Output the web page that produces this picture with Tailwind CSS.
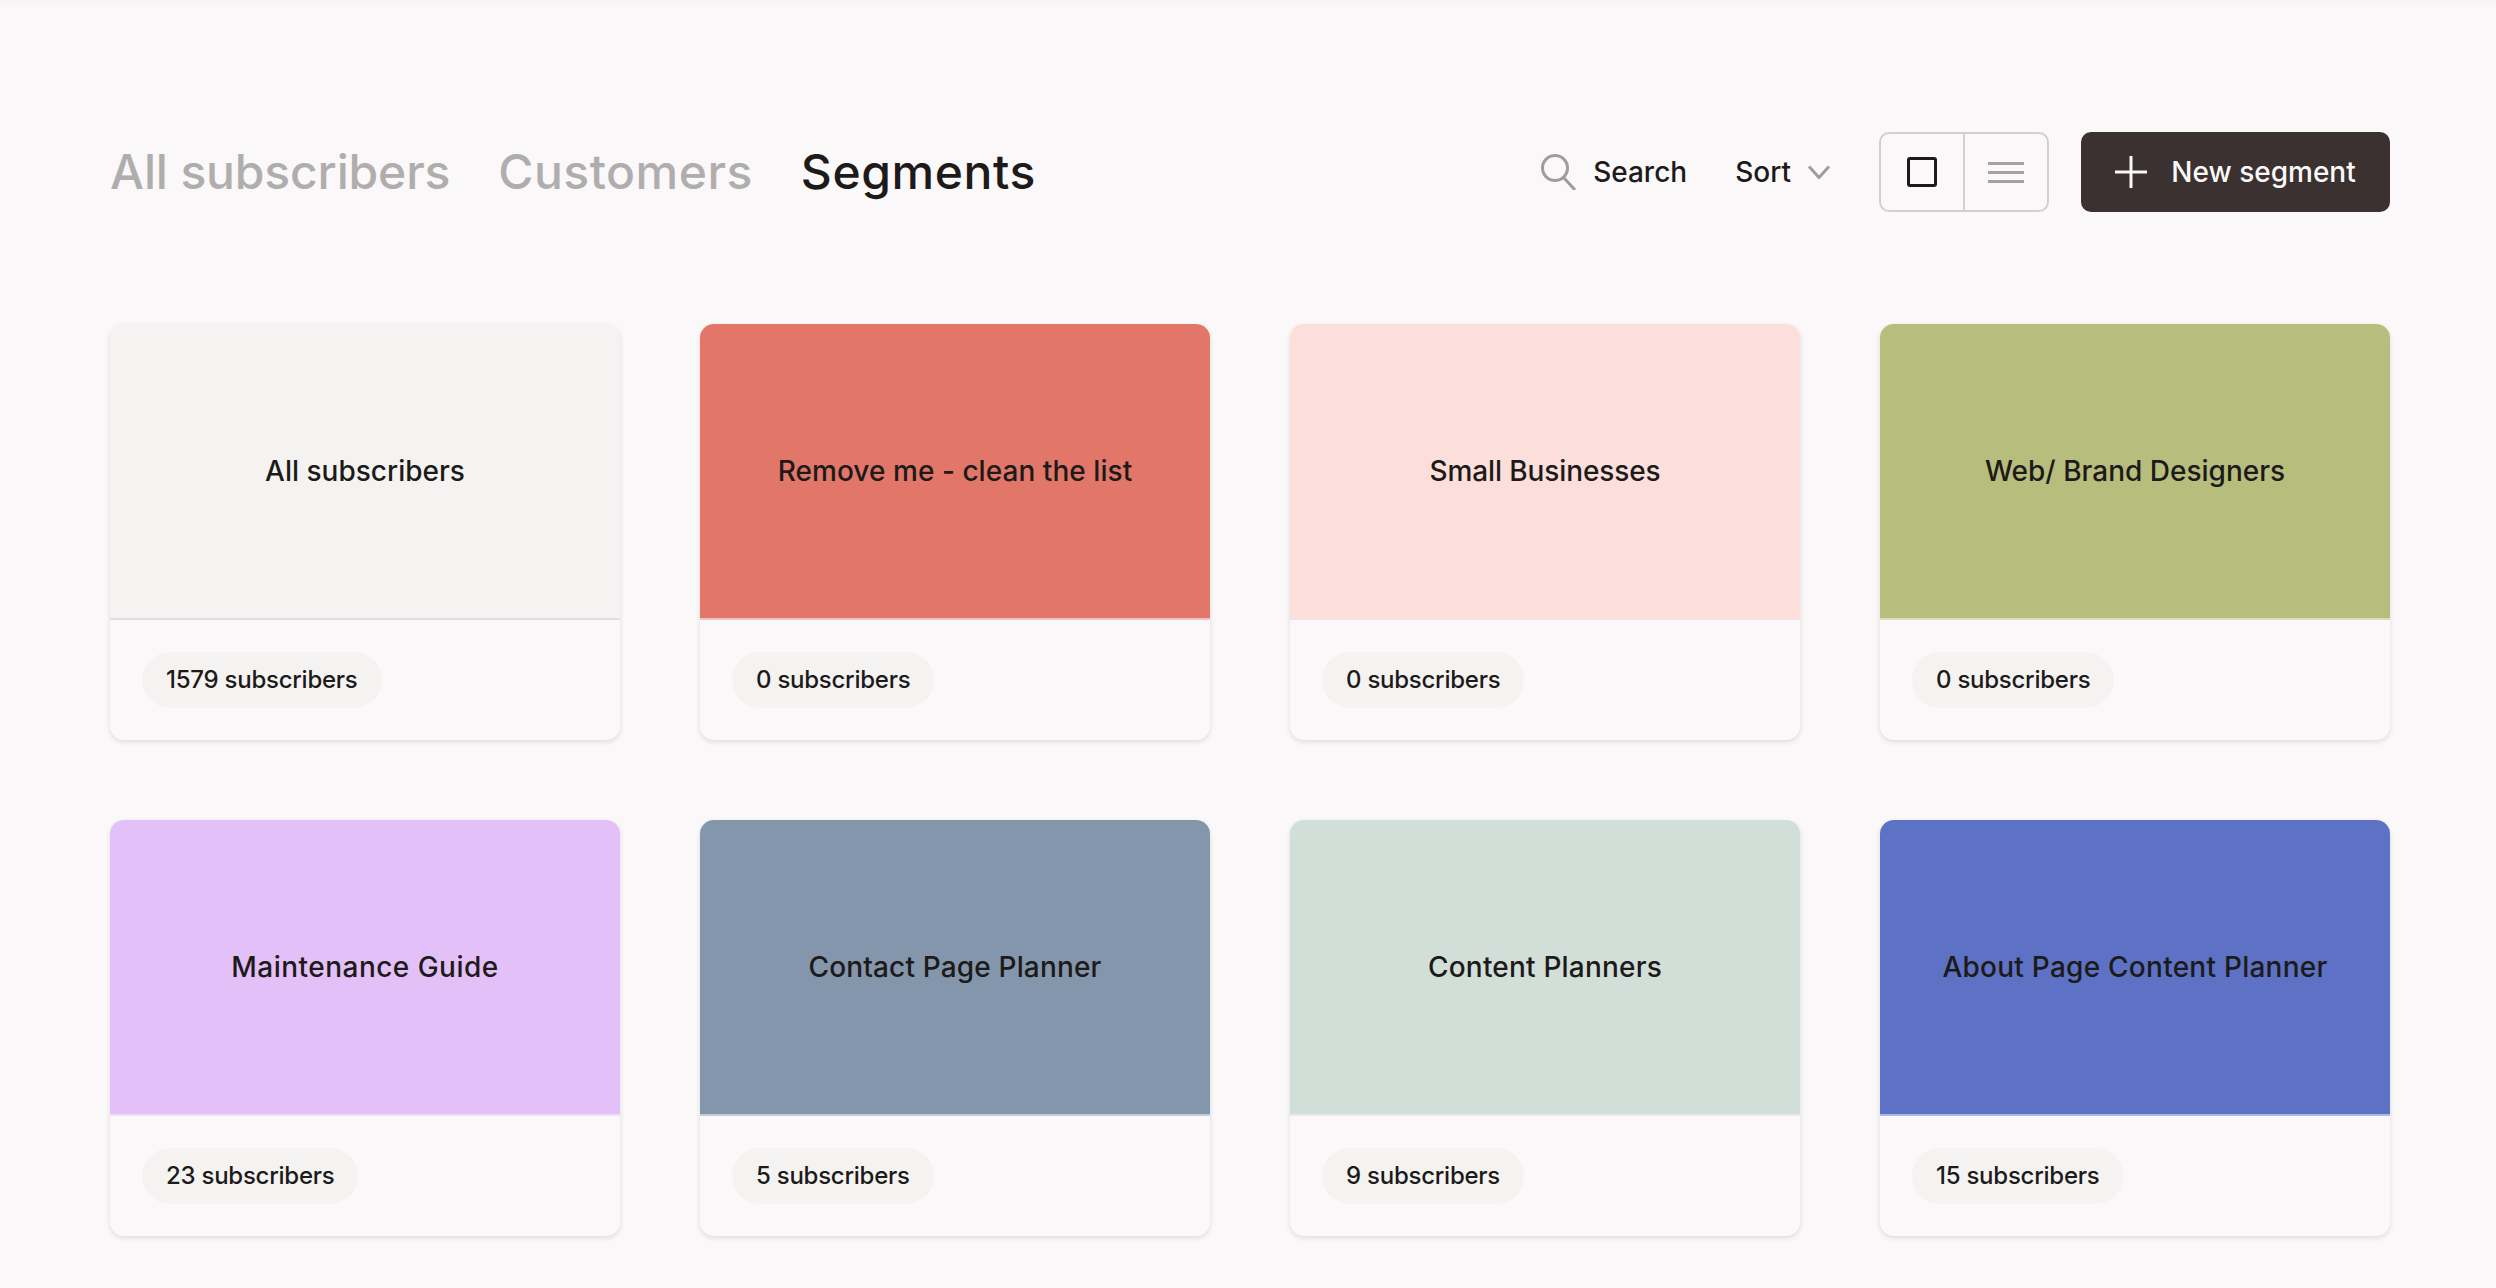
<!DOCTYPE html>
<html lang="en">
<head>
  <meta charset="UTF-8" />
  <title>Segments</title>
  <script src="https://cdn.jsdelivr.net/npm/@tailwindcss/browser@4"></script>
</head>
<body class="font-['Inter',sans-serif] antialiased bg-[#faf8f9] text-[#1d1a1a] h-[1288px] overflow-hidden">
  <div class="h-[10px] -mb-[10px] bg-gradient-to-b from-[#f6f4f5] to-[#faf8f9]"></div>
  <main class="pl-[110px] pr-[106px] pt-[132px]">
    <!-- Header -->
    <header class="h-[80px] flex items-center justify-between">
      <nav class="flex items-center gap-[48px] text-[48px] font-medium">
        <a class="text-[#b0aeac] tracking-[-0.15px]">All subscribers</a>
        <a class="text-[#b0aeac] tracking-[0.5px]">Customers</a>
        <a class="tracking-[0.6px]">Segments</a>
      </nav>
      <div class="flex items-center text-[28px] font-medium">
        <button class="flex items-center gap-[16px]">
          <svg class="w-[36px] h-[36px]" viewBox="0 0 36 36" fill="none" stroke="#a09c9b" stroke-width="3">
            <circle cx="14" cy="14" r="12.5" />
            <path d="M23 24l11 12" />
          </svg>
          Search
        </button>
        <button class="ml-[48px] flex items-center gap-[16px]">
          Sort
          <svg class="w-[24px] h-[14px]" viewBox="0 0 24 14" fill="none" stroke="#a09c9b" stroke-width="3">
            <path d="M2 1.5l10 11 10-11" />
          </svg>
        </button>
        <div class="ml-[48px] w-[170px] h-[80px] flex rounded-[10px] border-2 border-[#d2cfce]">
          <button class="flex-1 flex items-center justify-center border-r-2 border-[#d2cfce]">
            <span class="w-[30px] h-[30px] rounded-[3px] border-[3px] border-[#1d1a1a]"></span>
          </button>
          <button class="flex-1 flex flex-col items-center justify-center gap-[6px]">
            <span class="w-[36px] h-[3px] bg-[#a5a1a0]"></span>
            <span class="w-[36px] h-[3px] bg-[#a5a1a0]"></span>
            <span class="w-[36px] h-[3px] bg-[#a5a1a0]"></span>
          </button>
        </div>
        <button class="ml-[32px] w-[309px] h-[80px] flex items-center justify-center gap-[24px] rounded-[10px] bg-[#3b3130] text-[#faf8f9]">
          <svg class="w-[32px] h-[32px]" viewBox="0 0 32 32" fill="none" stroke="#faf8f9" stroke-width="3">
            <path d="M16 0v32M0 16h32" />
          </svg>
          New segment
        </button>
      </div>
    </header>

    <!-- Segment cards -->
    <section class="mt-[112px] grid grid-cols-4 gap-[80px]">
      <article class="h-[416px] flex flex-col rounded-[14px] overflow-hidden shadow-[0_2px_5px_rgba(0,0,0,0.12)]">
        <div class="h-[296px] flex items-center justify-center border-b-2 border-[#e2e0de] bg-[#f4f3f1] text-[28px] font-medium">All subscribers</div>
        <div class="flex-1 flex items-center px-[32px]"><span class="h-[56px] px-[24px] flex items-center rounded-full bg-[#f4f3f1] text-[24px] font-medium tracking-[-0.25px]">1579 subscribers</span></div>
      </article>
      <article class="h-[416px] flex flex-col rounded-[14px] overflow-hidden shadow-[0_2px_5px_rgba(0,0,0,0.12)]">
        <div class="h-[296px] flex items-center justify-center border-b-2 border-[#f1c5bf] bg-[#e27769] text-[28px] font-medium tracking-[0.05px]">Remove me - clean the list</div>
        <div class="flex-1 flex items-center px-[32px]"><span class="h-[56px] px-[24px] flex items-center rounded-full bg-[#f4f3f1] text-[24px] font-medium tracking-[-0.25px]">0 subscribers</span></div>
      </article>
      <article class="h-[416px] flex flex-col rounded-[14px] overflow-hidden shadow-[0_2px_5px_rgba(0,0,0,0.12)]">
        <div class="h-[296px] flex items-center justify-center border-b-2 border-[#f3e4e1] bg-[#fcdfdb] text-[28px] font-medium tracking-[-0.1px]">Small Businesses</div>
        <div class="flex-1 flex items-center px-[32px]"><span class="h-[56px] px-[24px] flex items-center rounded-full bg-[#f4f3f1] text-[24px] font-medium tracking-[-0.25px]">0 subscribers</span></div>
      </article>
      <article class="h-[416px] flex flex-col rounded-[14px] overflow-hidden shadow-[0_2px_5px_rgba(0,0,0,0.12)]">
        <div class="h-[296px] flex items-center justify-center border-b-2 border-[#dcdeba] bg-[#b7bd7c] text-[28px] font-medium">Web/ Brand Designers</div>
        <div class="flex-1 flex items-center px-[32px]"><span class="h-[56px] px-[24px] flex items-center rounded-full bg-[#f4f3f1] text-[24px] font-medium tracking-[-0.25px]">0 subscribers</span></div>
      </article>
      <article class="h-[416px] flex flex-col rounded-[14px] overflow-hidden shadow-[0_2px_5px_rgba(0,0,0,0.12)]">
        <div class="h-[296px] flex items-center justify-center border-b-2 border-[#efdcf8] bg-[#e4c0f8] text-[28px] font-medium tracking-[0.47px]">Maintenance Guide</div>
        <div class="flex-1 flex items-center px-[32px]"><span class="h-[56px] px-[24px] flex items-center rounded-full bg-[#f4f3f1] text-[24px] font-medium tracking-[-0.25px]">23 subscribers</span></div>
      </article>
      <article class="h-[416px] flex flex-col rounded-[14px] overflow-hidden shadow-[0_2px_5px_rgba(0,0,0,0.12)]">
        <div class="h-[296px] flex items-center justify-center border-b-2 border-[#c2cbd5] bg-[#8496ab] text-[28px] font-medium tracking-[0.16px]">Contact Page Planner</div>
        <div class="flex-1 flex items-center px-[32px]"><span class="h-[56px] px-[24px] flex items-center rounded-full bg-[#f4f3f1] text-[24px] font-medium tracking-[-0.25px]">5 subscribers</span></div>
      </article>
      <article class="h-[416px] flex flex-col rounded-[14px] overflow-hidden shadow-[0_2px_5px_rgba(0,0,0,0.12)]">
        <div class="h-[296px] flex items-center justify-center border-b-2 border-[#e5ebe8] bg-[#d2dfd8] text-[28px] font-medium tracking-[0.2px]">Content Planners</div>
        <div class="flex-1 flex items-center px-[32px]"><span class="h-[56px] px-[24px] flex items-center rounded-full bg-[#f4f3f1] text-[24px] font-medium tracking-[-0.25px]">9 subscribers</span></div>
      </article>
      <article class="h-[416px] flex flex-col rounded-[14px] overflow-hidden shadow-[0_2px_5px_rgba(0,0,0,0.12)]">
        <div class="h-[296px] flex items-center justify-center border-b-2 border-[#aeb8e1] bg-[#5d72c4] text-[28px] font-medium tracking-[0.25px]">About Page Content Planner</div>
        <div class="flex-1 flex items-center px-[32px]"><span class="h-[56px] px-[24px] flex items-center rounded-full bg-[#f4f3f1] text-[24px] font-medium tracking-[-0.25px]">15 subscribers</span></div>
      </article>
    </section>
  </main>
</body>
</html>
